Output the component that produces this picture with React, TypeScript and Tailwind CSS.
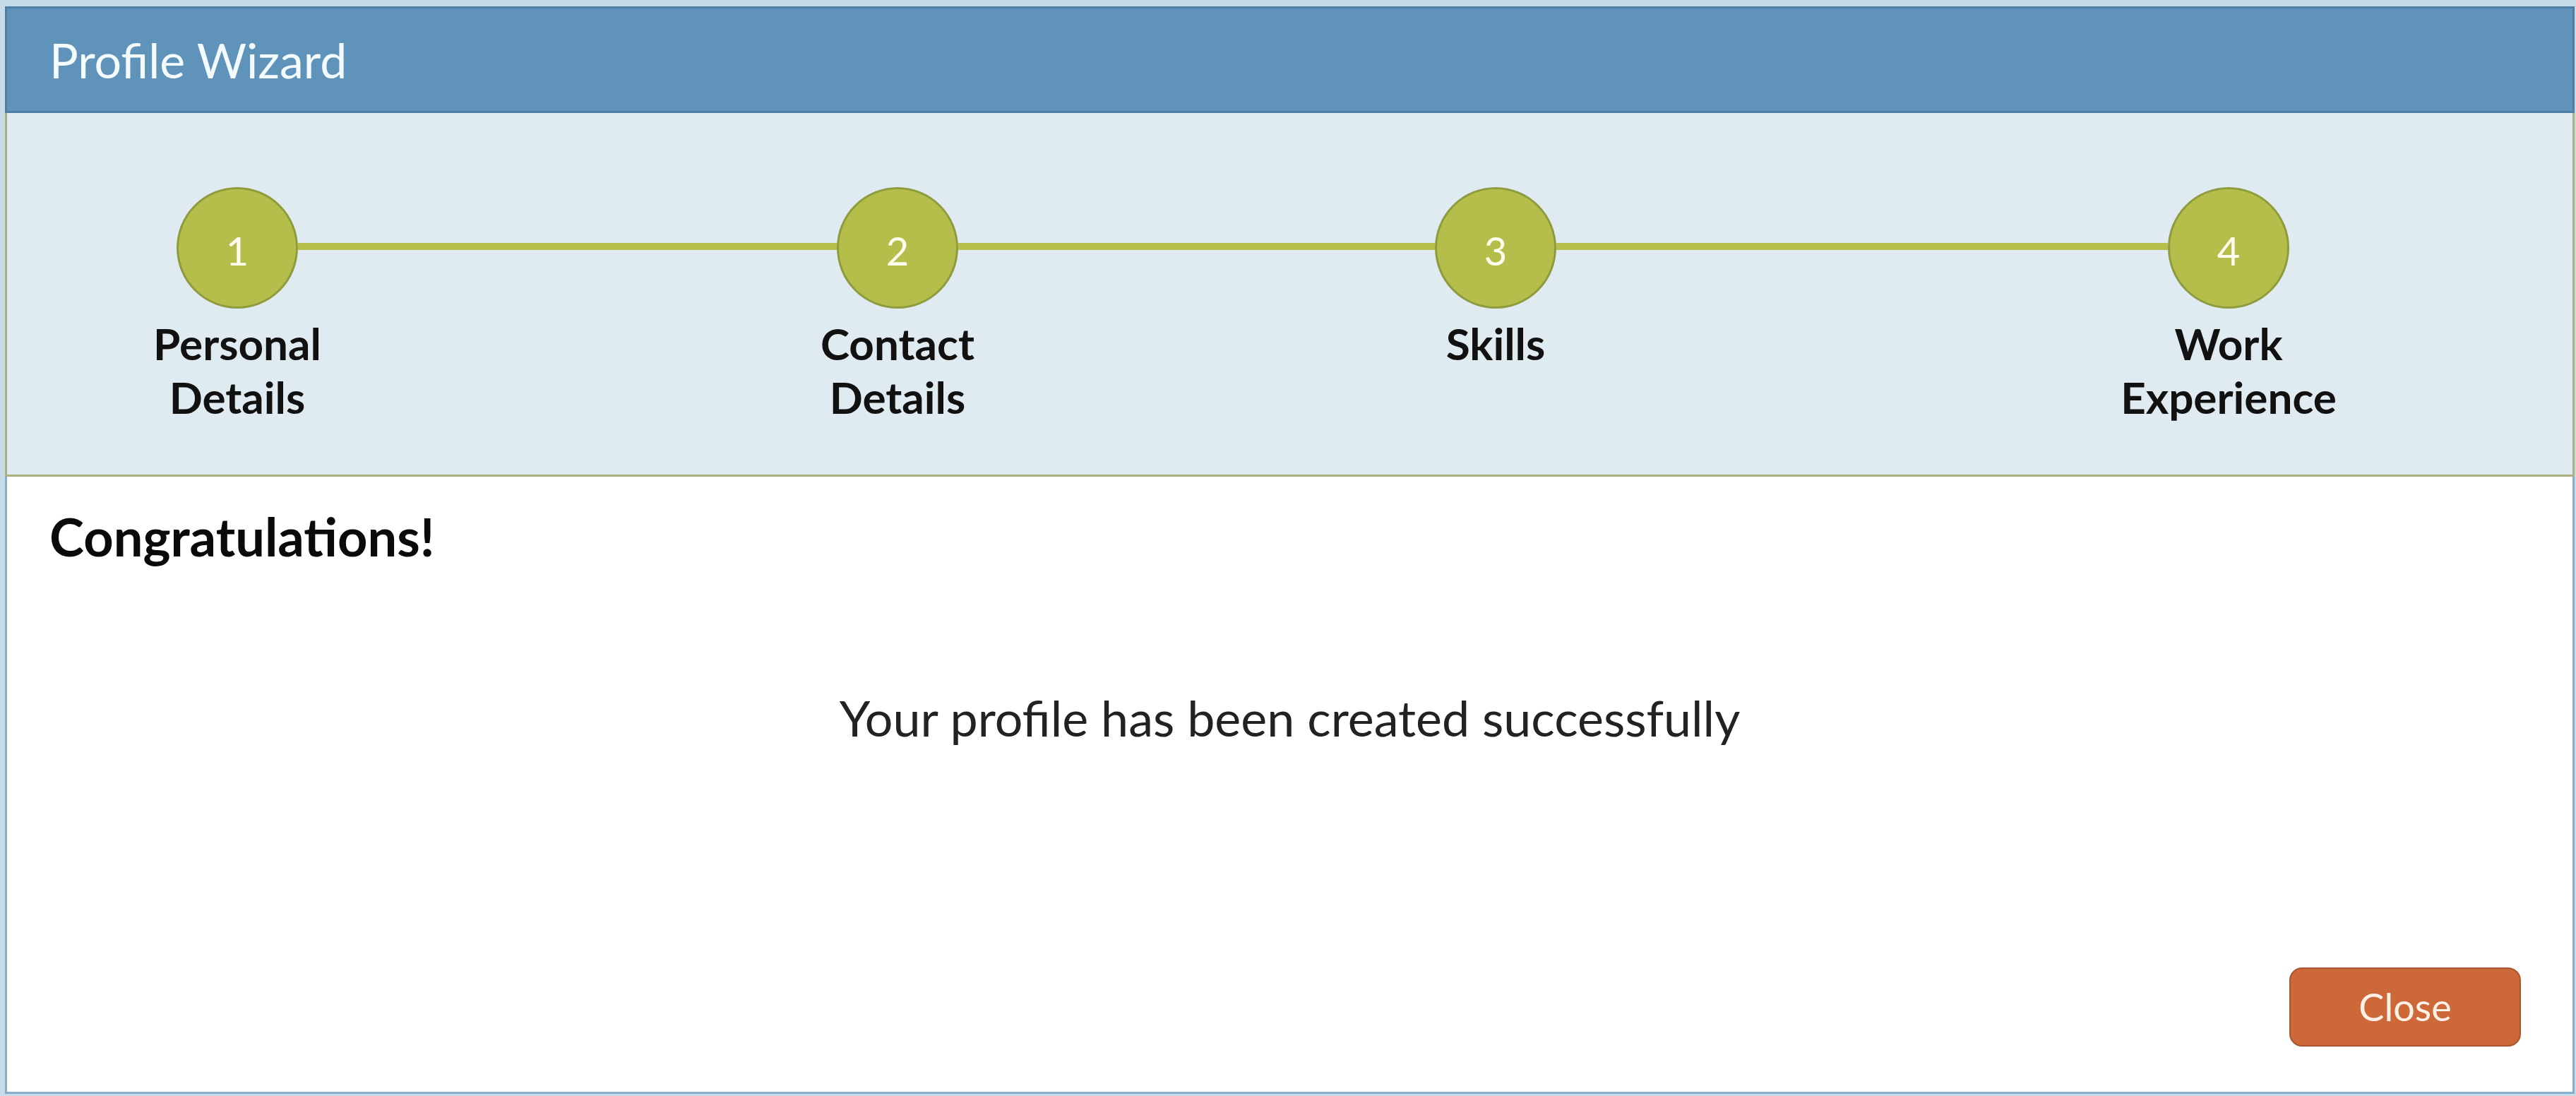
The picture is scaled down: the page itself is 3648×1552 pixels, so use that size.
const steps = [
  { num: '1', label: ['Personal', 'Details'] },
  { num: '2', label: ['Contact', 'Details'] },
  { num: '3', label: ['Skills'] },
  { num: '4', label: ['Work', 'Experience'] },
];

// widths of the connector lines between circle edges
const connectors = ['w-[763px]', 'w-[675px]', 'w-[866px]'];

function Step({ num, label }: { num: string; label: string[] }) {
  return (
    <div className="flex w-[172px] shrink-0 flex-col items-center">
      <div className="flex h-[172px] w-[172px] items-center justify-center rounded-full border-[3px] border-[#8f9c3e] bg-[#b6be4b]">
        <span className="mt-[8px] text-[56px] font-normal leading-none text-[#fffdf0]">{num}</span>
      </div>
      <div className="mt-[11px] flex flex-col items-center whitespace-nowrap text-[62px] font-bold leading-[76px] text-[#111111]">
        {label.map((line) => (
          <span key={line}>{line}</span>
        ))}
      </div>
    </div>
  );
}

export default function App() {
  return (
    <div
      className="flex h-[1552px] w-[3648px] flex-col bg-[#c6dae8] pb-[3px] pl-[7px] pr-[2px] pt-[9px]"
      style={{ fontFamily: 'Lato, "Open Sans", sans-serif' }}
    >
      {/* Header */}
      <div className="flex h-[151px] shrink-0 items-center border-[3px] border-[#4e7ea4] bg-[#6093b9] pl-[60px]">
        <span className="text-[68px] leading-none text-[#f4fbff]">Profile Wizard</span>
      </div>

      {/* Stepper */}
      <div className="h-[515px] shrink-0 border-x-[3px] border-b-[3px] border-[#a8b27a] bg-[#dfeaf1] pl-[240px] pt-[105px]">
        <div className="flex items-start">
          {steps.map((s, i) => (
            <div key={s.num} className="flex items-start">
              <Step num={s.num} label={s.label} />
              {i < connectors.length && (
                <div className={`mt-[79px] h-[10px] shrink-0 bg-[#b5bf4c] ${connectors[i]}`} />
              )}
            </div>
          ))}
        </div>
      </div>

      {/* Body */}
      <div className="flex flex-1 flex-col border-x-[3px] border-b-[3px] border-[#86aecb] bg-white">
        <h2 className="pl-[60px] pt-[40px] text-[74px] font-bold leading-[89px] text-[#0a0a0a]">Congratulations!</h2>
        <p className="mt-[170px] text-center text-[70px] leading-[84px] text-[#222222]">
          Your profile has been created successfully
        </p>
        <div className="mt-auto flex justify-end pb-[64px] pr-[73px]">
          <button className="flex h-[112px] w-[328px] items-center justify-center rounded-[18px] border-2 border-[#a9552f] bg-[#cd6839] text-[54px] leading-none text-[#fdf0e6]">
            Close
          </button>
        </div>
      </div>
    </div>
  );
}
